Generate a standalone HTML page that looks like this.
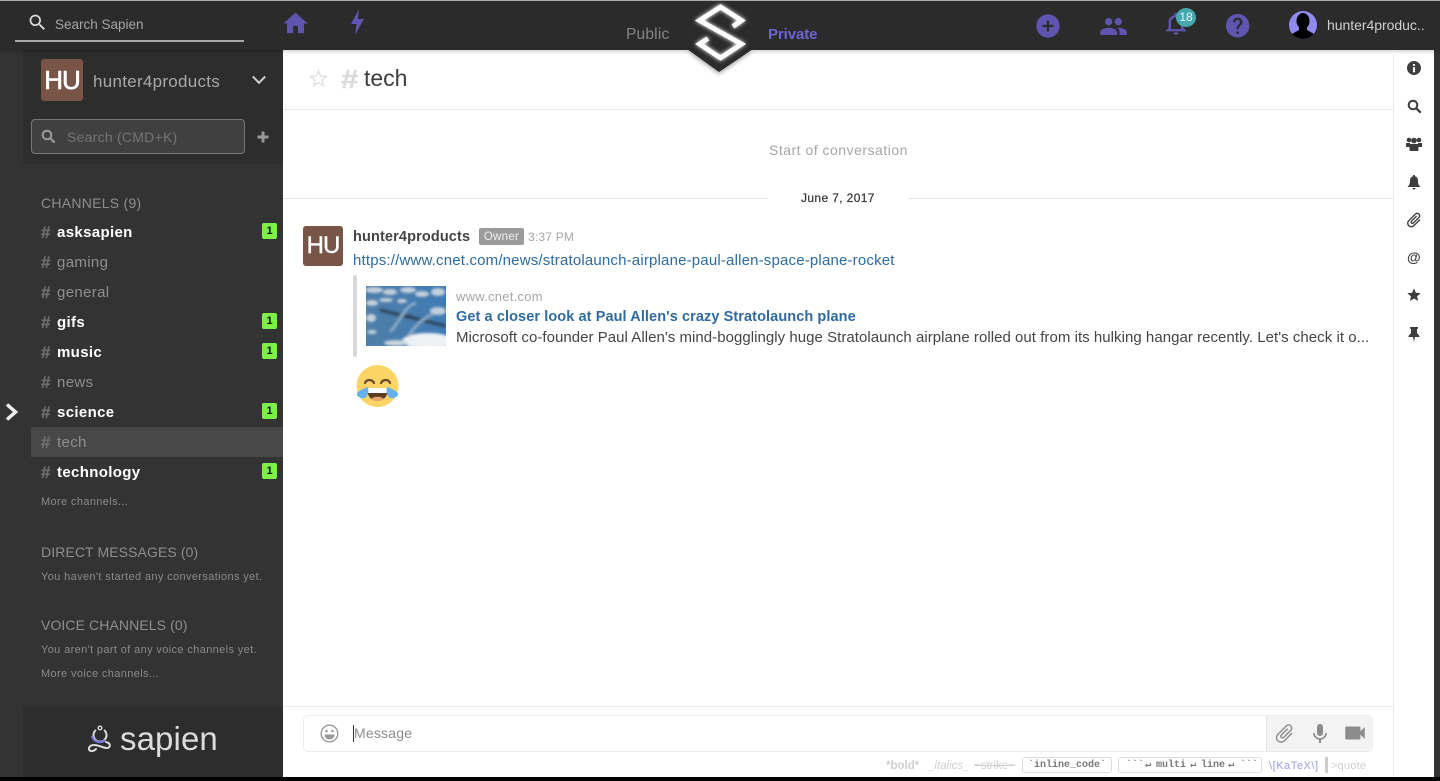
<!DOCTYPE html>
<html><head><meta charset="utf-8"><title>Sapien</title>
<style>
html,body{margin:0;padding:0;width:1440px;height:781px;overflow:hidden;background:#fff;font-family:"Liberation Sans",sans-serif}
.t{position:absolute;white-space:nowrap;line-height:1}
.b{position:absolute}
svg{position:absolute;overflow:visible}
.ch{position:absolute;left:41px;white-space:nowrap;line-height:15px;height:15px;font-size:15px;color:#8f8f8f;letter-spacing:.35px;padding-left:16px}
.ch i{position:absolute;left:0;top:0;font-style:normal;color:#6d6d6d;font-weight:bold;font-size:17px;line-height:15px;letter-spacing:0;-webkit-text-stroke:.35px #6d6d6d}
.ch.u{color:#fff;font-weight:bold}
.bd{position:absolute;left:262px;width:15px;height:16px;background:#7bf04a;border-radius:2px;color:#111;font-size:11px;font-weight:bold;text-align:center;line-height:16px}
.sec{position:absolute;left:41px;color:#8e8e8e;font-size:14px;line-height:1;white-space:nowrap;letter-spacing:.1px}
.sm{position:absolute;left:41px;color:#8a8a8a;font-size:11px;line-height:1;white-space:nowrap;letter-spacing:.37px}
.m{position:absolute;top:758px;font:bold 10px/15px "Liberation Mono",monospace;color:#777;white-space:nowrap}
</style></head><body>
<div class="b" style="left:0;top:0;width:1440px;height:781px;background:#fff"></div>
<!-- left rail & sidebar -->
<div class="b" style="left:0;top:49px;width:283px;height:728px;background:#333"></div>
<div class="b" style="left:23px;top:49px;width:260px;height:115px;background:#2d2d2d"></div>
<div class="b" style="left:23px;top:707px;width:260px;height:70px;background:#2d2d2d"></div>
<!-- right edge and bottom -->
<div class="b" style="left:1434px;top:49px;width:6px;height:728px;background:#333"></div>
<div class="b" style="left:0;top:777px;width:1440px;height:4px;background:#000"></div>
<!-- topbar -->
<div class="b" style="left:0;top:0;width:1440px;height:49.500px;background:#2b2b2b;box-shadow:0 1px 4px rgba(0,0,0,.25)"></div>
<div class="b" style="left:0;top:0;width:1440px;height:1px;background:#aaa"></div>
<svg style="left:27px;top:12px" width="21" height="21" viewBox="0 0 24 24"><path fill="#ddd" d="M15.500 14h-.79l-.28-.27C15.410 12.590 16 11.110 16 9.500 16 5.910 13.090 3 9.500 3S3 5.910 3 9.500 5.910 16 9.500 16c1.610 0 3.090-.59 4.230-1.570l.27.28v.79l5 4.990L20.490 19l-4.990-5zm-6 0C7.010 14 5 11.990 5 9.500S7.010 5 9.500 5 14 7.010 14 9.500 11.990 14 9.500 14z"/></svg>
<div class="t" style="left:55px;top:18px;font-size:13.500px;color:#a5a5a5;letter-spacing:0">Search Sapien</div>
<div class="b" style="left:15px;top:40px;width:229px;height:2px;background:#a8a8a8"></div>
<svg style="left:281px;top:9px" width="29" height="29" viewBox="0 0 24 24"><path fill="#5f54b0" d="M10 20v-6h4v6h5v-8h3L12 3 2 12h3v8z"/></svg>
<svg style="left:350px;top:9px" width="16" height="26" viewBox="0 0 16 26"><path fill="#5f54b0" d="M9 0L1 15h5.500L5 26l9-16H8z"/></svg>
<div class="t" style="left:626px;top:27px;font-size:15.500px;color:#858585;letter-spacing:.2px">Public</div>
<div class="t" style="left:768px;top:27px;font-size:15px;font-weight:bold;color:#6e62d8;letter-spacing:-.1px">Private</div>
<!-- logo -->
<svg style="left:680px;top:0;filter:drop-shadow(0 2px 2px rgba(0,0,0,.35))" width="80" height="75" viewBox="680 0 80 75"><path fill="#2b2b2b" d="M687 49L719 72 753 49z"/></svg>
<svg style="left:680px;top:0;filter:drop-shadow(0 0 2px #fff)" width="80" height="70" viewBox="680 0 80 70"><path fill="none" stroke="#fff" stroke-width="4.800" stroke-linejoin="miter" d="M733 26.500L741.500 20.500 720.500 7 699.500 20.500 741.500 44 720.500 58 699.500 44 708 38.500"/></svg>
<svg style="left:1036px;top:14px" width="24" height="24" viewBox="0 0 24 24"><circle cx="12" cy="12" r="11.700" fill="#5f54b0"/><path fill="none" stroke="#2b2b2b" stroke-width="2.200" d="M12 6.500v11M6.500 12h11"/></svg>
<svg style="left:1099px;top:12px" width="29" height="29" viewBox="0 0 24 24"><path fill="#5f54b0" d="M16 11c1.660 0 2.990-1.340 2.990-3S17.660 5 16 5c-1.660 0-3 1.340-3 3s1.340 3 3 3zm-8 0c1.660 0 2.990-1.340 2.990-3S9.660 5 8 5C6.340 5 5 6.340 5 8s1.340 3 3 3zm0 2c-2.330 0-7 1.170-7 3.500V19h14v-2.500c0-2.330-4.670-3.500-7-3.500zm8 0c-.29 0-.62.020-.97.050 1.160.84 1.970 1.970 1.970 3.450V19h6v-2.500c0-2.330-4.670-3.500-7-3.500z"/></svg>
<svg style="left:1161px;top:10px" width="30" height="27" viewBox="0 0 24 24" preserveAspectRatio="none"><path fill="#5f54b0" d="M12 22c1.100 0 2-.9 2-2h-4c0 1.100.89 2 2 2zm6-6v-5c0-3.070-1.630-5.640-4.500-6.320V4c0-.83-.67-1.500-1.500-1.500s-1.500.67-1.500 1.500v.68C7.640 5.360 6 7.920 6 11v5l-2 2v1h16v-1l-2-2zm-2 1H8v-6c0-2.480 1.510-4.500 4-4.500s4 2.020 4 4.500v6z"/></svg>
<div class="t" style="left:1176px;top:8px;width:20px;height:19px;border-radius:50%;background:#45a9ad;color:#e8f4f4;font-size:12px;line-height:19px;text-align:center">18</div>
<svg style="left:1226px;top:14px" width="23.400" height="23.400" viewBox="2 2 20 20"><path fill="#5f54b0" d="M12 2C6.480 2 2 6.480 2 12s4.480 10 10 10 10-4.480 10-10S17.520 2 12 2zm1 17h-2v-2h2v2zm2.070-7.750l-.9.92C13.450 12.900 13 13.500 13 15h-2v-.5c0-1.100.45-2.100 1.170-2.830l1.240-1.260c.37-.36.59-.86.59-1.410 0-1.100-.9-2-2-2s-2 .9-2 2H8c0-2.210 1.790-4 4-4s4 1.790 4 4c0 .88-.36 1.680-.93 2.250z"/></svg>
<svg style="left:1289px;top:11px" width="28" height="28" viewBox="0 0 28 28"><defs><clipPath id="a"><circle cx="14" cy="14" r="14"/></clipPath></defs><circle cx="14" cy="14" r="14" fill="#8f8af0"/><g clip-path="url(#a)"><ellipse cx="14" cy="10" rx="6.500" ry="8" fill="#000"/><path fill="#000" d="M10 15h8v4l7 4v5H3v-5l7-4z"/></g></svg>
<div class="t" style="left:1327px;top:18px;font-size:14px;color:#d0d0d0;letter-spacing:-.03px">hunter4produc..</div>

<!-- sidebar header -->
<div class="b" style="left:41px;top:59px;width:42px;height:42px;border-radius:3px;background:#795548;color:#fff;font-size:26px;line-height:42px;text-align:center;letter-spacing:-1px;-webkit-text-stroke:.6px #fff">HU</div>
<div class="t" style="left:93px;top:73px;font-size:17px;color:#a8a8a8;letter-spacing:.28px">hunter4products</div>
<svg style="left:252px;top:75px" width="14" height="10" viewBox="0 0 14 10"><path fill="none" stroke="#ccc" stroke-width="2" d="M.8 1.500L7 7.800l6.200-6.300"/></svg>
<div class="b" style="left:31px;top:119px;width:212px;height:33px;border:1px solid #777;border-radius:4px;background:#404040"></div>
<svg style="left:41px;top:129px" width="15" height="15" viewBox="0 0 15 15"><circle cx="6" cy="6" r="4.300" fill="none" stroke="#9a9a9a" stroke-width="2"/><path stroke="#9a9a9a" stroke-width="2.200" d="M9.200 9.200l4.300 4.300"/></svg>
<div class="t" style="left:67px;top:130px;font-size:14px;color:#757575;letter-spacing:.25px">Search (CMD+K)</div>
<svg style="left:257px;top:131px" width="12" height="12" viewBox="0 0 12 12"><path stroke="#999" stroke-width="3" d="M6 .5v11M.5 6h11"/></svg>

<!-- channels -->
<div class="sec" style="top:196px;letter-spacing:.27px">CHANNELS (9)</div>
<div class="b" style="left:31px;top:427px;width:252px;height:30px;background:#484848"></div>
<div class="ch u" style="top:225px"><i>#</i>asksapien</div><div class="bd" style="top:223px">1</div>
<div class="ch" style="top:255px"><i>#</i>gaming</div>
<div class="ch" style="top:285px"><i>#</i>general</div>
<div class="ch u" style="top:315px"><i>#</i>gifs</div><div class="bd" style="top:313px">1</div>
<div class="ch u" style="top:345px"><i>#</i>music</div><div class="bd" style="top:343px">1</div>
<div class="ch" style="top:375px"><i>#</i>news</div>
<div class="ch u" style="top:405px"><i>#</i>science</div><div class="bd" style="top:403px">1</div>
<div class="ch" style="top:435px"><i>#</i>tech</div>
<div class="ch u" style="top:465px"><i>#</i>technology</div><div class="bd" style="top:463px">1</div>
<div class="sm" style="top:497px">More channels...</div>
<div class="sec" style="top:545px">DIRECT MESSAGES (0)</div>
<div class="sm" style="top:572px">You haven't started any conversations yet.</div>
<div class="sec" style="top:618px">VOICE CHANNELS (0)</div>
<div class="sm" style="top:645px">You aren't part of any voice channels yet.</div>
<div class="sm" style="top:669px">More voice channels...</div>
<svg style="left:5px;top:403px" width="14" height="18" viewBox="0 0 14 18"><path fill="none" stroke="#eee" stroke-width="3.500" d="M2 1.500L10.500 9 2 16.500"/></svg>

<!-- sapien logo -->
<svg style="left:86px;top:725px" width="28" height="30" viewBox="0 0 28 30"><path fill="none" stroke="#ddd" stroke-width="2" d="M10 5a6.500 6.500 0 1 0 8 0"/><circle cx="14" cy="3" r="1.800" fill="none" stroke="#ddd" stroke-width="1.400"/><path fill="none" stroke="#7d78e8" stroke-width="2.200" d="M6 11a8 8 0 0 0 13 4"/><path fill="none" stroke="#ddd" stroke-width="2" stroke-linecap="round" d="M20 17c5 1 5 6 1 6-4 0-8-3-13-3-5 0-7 5-3 6 3 .5 4-1 5-2"/></svg>
<div class="t" style="left:120px;top:722px;font-size:33px;color:#dcdcdc;letter-spacing:.1px">sapien</div>

<!-- header of main -->
<svg style="left:307px;top:67px" width="23" height="23" viewBox="0 0 24 24"><path fill="#e2e2e2" d="M22 9.240l-7.190-.62L12 2 9.190 8.630 2 9.240l5.460 4.730L5.820 21 12 17.270 18.180 21l-1.630-7.030L22 9.240zM12 15.400l-3.760 2.270 1-4.280-3.320-2.880 4.380-.38L12 6.100l1.710 4.040 4.380.38-3.320 2.880 1 4.280L12 15.400z"/></svg>
<div class="t" style="left:341px;top:66px;font-size:26px;font-weight:bold;color:#dcdcdc;transform:scaleX(1.200);transform-origin:left;-webkit-text-stroke:.5px #dcdcdc">#</div>
<div class="t" style="left:364px;top:67px;font-size:23px;color:#3d3d3d">tech</div>
<div class="b" style="left:283px;top:109px;width:1110px;height:1px;background:#e8e8e8"></div>
<div class="b" style="left:1393px;top:50px;width:1px;height:727px;background:#ececec"></div>
<!-- right rail -->
<svg style="left:1407px;top:61px" width="14" height="14" viewBox="2 2 20 20"><path fill="#3d3d3d" d="M12 2C6.480 2 2 6.480 2 12s4.480 10 10 10 10-4.480 10-10S17.520 2 12 2zm1.500 16h-3v-7h3v7zm0-9h-3V6.500h3V9z"/></svg>
<svg style="left:1407px;top:99px" width="15" height="15" viewBox="0 0 15 15"><circle cx="6" cy="6" r="4.300" fill="none" stroke="#3d3d3d" stroke-width="2"/><path stroke="#3d3d3d" stroke-width="2.200" d="M9.200 9.200l4.500 4.500"/></svg>
<svg style="left:1406px;top:137px" width="16" height="14" viewBox="0 0 16 14"><g fill="#3d3d3d"><circle cx="3" cy="3" r="2.300"/><circle cx="13" cy="3" r="2.300"/><circle cx="8" cy="3.500" r="2.800"/><path d="M0 6h4v4H0zM12 6h4v4h-4z"/><path d="M3.500 7h9v6a1 1 0 0 1-1 1h-7a1 1 0 0 1-1-1z"/></g></svg>
<svg style="left:1407px;top:175px" width="14" height="15" viewBox="0 0 14 15"><path fill="#3d3d3d" d="M7 0a1 1 0 0 1 1 1.200C10.500 2 11 4 11 6c0 3 1 4.500 2.500 6H.5C2 10.500 3 9 3 6c0-2 .5-4 3-4.800A1 1 0 0 1 7 0zM5.500 13h3a1.500 1.500 0 0 1-3 0z"/></svg>
<svg style="left:1405px;top:211px" width="18" height="18" viewBox="0 0 24 24"><g transform="rotate(45 12 12)"><path fill="#3d3d3d" stroke="#3d3d3d" stroke-width=".4" d="M16.500 6v11.500c0 2.210-1.790 4-4 4s-4-1.790-4-4V5c0-1.380 1.120-2.500 2.500-2.500s2.500 1.120 2.500 2.500v10.500c0 .55-.45 1-1 1s-1-.45-1-1V6H10v9.500c0 1.380 1.120 2.500 2.500 2.500s2.500-1.120 2.500-2.500V5c0-2.210-1.790-4-4-4S7 2.790 7 5v12.500c0 3.040 2.460 5.500 5.500 5.500s5.500-2.460 5.500-5.500V6h-1.500z"/></g></svg>
<div class="t" style="left:1407px;top:250px;font-size:14px;color:#3d3d3d;font-weight:bold">@</div>
<svg style="left:1406px;top:287px" width="16" height="16" viewBox="0 0 24 24"><path fill="#3d3d3d" d="M12 17.270L18.180 21l-1.640-7.030L22 9.240l-7.190-.61L12 2 9.190 8.630 2 9.240l5.460 4.730L5.820 21z"/></svg>
<svg style="left:1408px;top:327px" width="12" height="15" viewBox="0 0 12 15"><path fill="#3d3d3d" d="M2 0h8v1.500L9 2v4l2.500 3v1H7L6 15l-1-5H.5V9L3 6V2L2 1.500z"/></svg>

<!-- message area -->
<div class="t" style="left:769px;top:143px;font-size:14px;color:#a5a5a5;letter-spacing:.5px">Start of conversation</div>
<div class="b" style="left:283px;top:198px;width:485px;height:1px;background:#e8e8e8"></div>
<div class="b" style="left:908px;top:198px;width:485px;height:1px;background:#e8e8e8"></div>
<div class="t" style="left:801px;top:192px;font-size:12px;color:#333;letter-spacing:.37px;-webkit-text-stroke:.2px #333">June 7, 2017</div>
<div class="b" style="left:303px;top:226px;width:40px;height:40px;border-radius:3px;background:#795548;color:#fff;font-size:24px;line-height:40px;text-align:center;letter-spacing:-1px;-webkit-text-stroke:.4px #fff">HU</div>
<div class="t" style="left:353px;top:230px;font-size:14.500px;font-weight:bold;color:#444;letter-spacing:.13px">hunter4products</div>
<div class="b" style="left:479px;top:228px;width:45px;height:17px;border-radius:2px;background:#9b9b9b;color:#eee;font-size:11.500px;line-height:18px;text-align:center;letter-spacing:.3px">Owner</div>
<div class="t" style="left:528px;top:231px;font-size:12px;color:#a5a5a5;letter-spacing:.2px">3:37 PM</div>
<div class="t" style="left:353px;top:253px;font-size:15px;color:#2f6b9e;letter-spacing:.18px">https://www.cnet.com/news/stratolaunch-airplane-paul-allen-space-plane-rocket</div>
<div class="b" style="left:353px;top:275px;width:4px;height:82px;border-radius:2px;background:#d8d8d8"></div>
<svg style="left:366px;top:286px;overflow:hidden" width="80" height="60" viewBox="0 0 80 60"><defs><linearGradient id="s" x1="0" y1="0" x2="1" y2="0"><stop offset="0" stop-color="#4f7ea8"/><stop offset="1" stop-color="#3f7bb5"/></linearGradient><filter id="bl"><feGaussianBlur stdDeviation="1.300"/></filter></defs><rect width="80" height="60" fill="url(#s)"/><g filter="url(#bl)"><g fill="#c4d0dc"><ellipse cx="8" cy="4" rx="9" ry="3"/><ellipse cx="24" cy="6" rx="7" ry="3"/><ellipse cx="42" cy="4" rx="8" ry="3"/><ellipse cx="56" cy="8" rx="7" ry="3"/><ellipse cx="72" cy="6" rx="7" ry="4"/><ellipse cx="6" cy="17" rx="6" ry="3"/><ellipse cx="20" cy="14" rx="7" ry="2"/><ellipse cx="36" cy="15" rx="5" ry="2"/><ellipse cx="72" cy="25" rx="8" ry="4"/><ellipse cx="5" cy="32" rx="5" ry="4"/><ellipse cx="6" cy="46" rx="5" ry="2"/></g><ellipse cx="62" cy="55" rx="26" ry="8" fill="#eef2f5"/><ellipse cx="30" cy="57" rx="12" ry="3" fill="#c8d4de"/><path stroke="#2e4258" stroke-width="3" d="M14 24L80 40"/><path stroke="#8ba9c2" stroke-width="3" fill="none" d="M24 46C34 36 38 20 50 17M42 50C50 40 56 32 68 28"/><path stroke="#2e4258" stroke-width="2" d="M42 29l10 4"/></g></svg>
<div class="t" style="left:456px;top:290px;font-size:13px;color:#a5a5a5;letter-spacing:.25px">www.cnet.com</div>
<div class="t" style="left:456px;top:310px;font-size:14.500px;font-weight:bold;color:#2f6b9e;letter-spacing:.09px">Get a closer look at Paul Allen's crazy Stratolaunch plane</div>
<div class="t" style="left:456px;top:328px;line-height:19px;font-size:15px;color:#444;letter-spacing:.04px">Microsoft co-founder Paul Allen's mind-bogglingly huge Stratolaunch airplane rolled out from its hulking hangar recently. Let's check it o...</div>
<!-- emoji -->
<svg style="left:356px;top:365px" width="44" height="42" viewBox="0 0 44 42"><circle cx="21.500" cy="21" r="21" fill="#fcd466"/><path fill="none" stroke="#664a2c" stroke-width="2.200" stroke-linecap="round" d="M9 18c1.500-4 7-4 9 0M25 18c2-4 7.500-4 9 0"/><path fill="#5d3d22" d="M11 23h21c0 8-4 13-10.500 13S11 31 11 23z"/><path fill="#fff" d="M11 23h21l-.5 5h-20z"/><path fill="#e9a56b" d="M15 34c3-3 10-3 13 0-4 3-9 3-13 0z"/><path fill="#65b1ee" d="M1 28c3-3 8-5 11-6 1 5 0 9-3 11-3 1-9-1-8-5zM42 28c-3-3-8-5-11-6-1 5 0 9 3 11 3 1 9-1 8-5z"/></svg>

<!-- composer -->
<div class="b" style="left:283px;top:706px;width:1110px;height:1px;background:#e8e8e8"></div>
<div class="b" style="left:303px;top:715px;width:1068px;height:35px;border:1px solid #ececec;border-radius:5px;background:#fff"></div>
<div class="b" style="left:1266px;top:716px;width:106px;height:35px;border-left:1px solid #e6e6e6;border-radius:0 5px 5px 0;background:#f3f3f3;box-sizing:border-box"></div>
<svg style="left:320px;top:724px" width="19" height="19" viewBox="0 0 19 19"><circle cx="9.500" cy="9.500" r="8.300" fill="none" stroke="#999" stroke-width="1.400"/><circle cx="6.500" cy="7" r="1.300" fill="#999"/><circle cx="12.500" cy="7" r="1.300" fill="#999"/><path fill="#999" d="M4.500 10.500h10c0 3-2.200 5-5 5s-5-2-5-5z"/></svg>
<div class="b" style="left:353px;top:725px;width:1px;height:17px;background:#333"></div>
<div class="t" style="left:354px;top:726px;font-size:14px;color:#8c8c8c;letter-spacing:.2px">Message</div>
<svg style="left:1273px;top:722px" width="23" height="23" viewBox="0 0 24 24"><g transform="rotate(45 12 12)"><path fill="#8c8c8c" d="M16.500 6v11.500c0 2.210-1.790 4-4 4s-4-1.790-4-4V5c0-1.380 1.120-2.500 2.500-2.500s2.500 1.120 2.500 2.500v10.500c0 .55-.45 1-1 1s-1-.45-1-1V6H10v9.500c0 1.380 1.120 2.500 2.500 2.500s2.500-1.120 2.500-2.500V5c0-2.210-1.790-4-4-4S7 2.790 7 5v12.500c0 3.040 2.460 5.500 5.500 5.500s5.500-2.460 5.500-5.500V6h-1.500z"/></g></svg>
<svg style="left:1308px;top:722px" width="24" height="24" viewBox="0 0 24 24"><path fill="#8c8c8c" d="M12 14c1.660 0 2.990-1.340 2.990-3L15 5c0-1.660-1.340-3-3-3S9 3.340 9 5v6c0 1.660 1.340 3 3 3zm5.300-3c0 3-2.540 5.100-5.300 5.100S6.700 14 6.700 11H5c0 3.410 2.720 6.230 6 6.720V21h2v-3.280c3.280-.48 6-3.300 6-6.720h-1.700z"/></svg>
<svg style="left:1342px;top:720px" width="26" height="26" viewBox="0 0 24 24"><path fill="#8c8c8c" d="M17 10.500V7c0-.55-.45-1-1-1H4c-.55 0-1 .45-1 1v10c0 .55.45 1 1 1h12c.55 0 1-.45 1-1v-3.500l4 4v-11l-4 4z"/></svg>
<!-- hints -->
<div class="t" style="left:886px;top:761px;font-size:11.500px;font-weight:bold;color:#cfcfcf">*bold*</div>
<div class="t" style="left:928px;top:761px;font-size:11.500px;font-style:italic;color:#cfcfcf">_italics_</div>
<div class="t" style="left:974px;top:761px;font-size:11.500px;color:#cfcfcf"><s>~strike~</s></div>
<div class="b" style="left:1022px;top:757px;width:88px;height:14px;border:1px solid #ddd;border-radius:3px;font:bold 10px/15px 'Liberation Mono',monospace;color:#777;text-align:center;white-space:nowrap">`inline_code`</div>
<div class="b" style="left:1118px;top:757px;width:142px;height:14px;border:1px solid #ddd;border-radius:3px"></div>
<div class="m" style="left:1126px">&#96;&#96;&#96;</div>
<div class="m" style="left:1145px">&#8629;</div>
<div class="m" style="left:1156px">multi</div>
<div class="m" style="left:1190px">&#8629;</div>
<div class="m" style="left:1201px">line</div>
<div class="m" style="left:1228px">&#8629;</div>
<div class="m" style="left:1240px">&#96;&#96;&#96;</div>
<div class="t" style="left:1269px;top:761px;font-size:11px;color:#9a9ce8;letter-spacing:.55px">\[KaTeX\]</div>
<div class="b" style="left:1325px;top:757px;width:3px;height:16px;background:#ccc"></div>
<div class="t" style="left:1331px;top:761px;font-size:11px;color:#cfcfcf;letter-spacing:.2px">&gt;quote</div>
</body></html>
